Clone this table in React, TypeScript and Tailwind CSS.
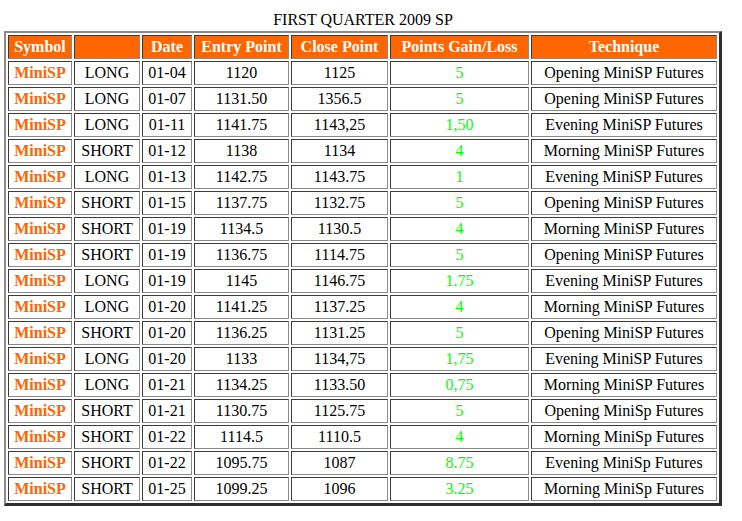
const rows: [string, string, string, string, string, string][] = [
  ['LONG', '01-04', '1120', '1125', '5', 'Opening MiniSP Futures'],
  ['LONG', '01-07', '1131.50', '1356.5', '5', 'Opening MiniSP Futures'],
  ['LONG', '01-11', '1141.75', '1143,25', '1,50', 'Evening MiniSP Futures'],
  ['SHORT', '01-12', '1138', '1134', '4', 'Morning MiniSP Futures'],
  ['LONG', '01-13', '1142.75', '1143.75', '1', 'Evening MiniSP Futures'],
  ['SHORT', '01-15', '1137.75', '1132.75', '5', 'Opening MiniSP Futures'],
  ['SHORT', '01-19', '1134.5', '1130.5', '4', 'Morning MiniSP Futures'],
  ['SHORT', '01-19', '1136.75', '1114.75', '5', 'Opening MiniSP Futures'],
  ['LONG', '01-19', '1145', '1146.75', '1.75', 'Evening MiniSP Futures'],
  ['LONG', '01-20', '1141.25', '1137.25', '4', 'Morning MiniSP Futures'],
  ['SHORT', '01-20', '1136.25', '1131.25', '5', 'Opening MiniSP Futures'],
  ['LONG', '01-20', '1133', '1134,75', '1,75', 'Evening MiniSP Futures'],
  ['LONG', '01-21', '1134.25', '1133.50', '0,75', 'Morning MiniSP Futures'],
  ['SHORT', '01-21', '1130.75', '1125.75', '5', 'Opening MiniSp Futures'],
  ['SHORT', '01-22', '1114.5', '1110.5', '4', 'Morning MiniSp Futures'],
  ['SHORT', '01-22', '1095.75', '1087', '8.75', 'Evening MiniSp Futures'],
  ['SHORT', '01-25', '1099.25', '1096', '3.25', 'Morning MiniSp Futures'],
]

// inset cell border, like an old border=2 table
const cell =
  'h-[24px] p-0 text-center align-middle leading-[18px] border border-t-[#3a3a3a] border-l-[#3a3a3a] border-r-[#8a8a8a] border-b-[#8a8a8a]'

const head = cell + ' bg-[#ff6600] font-bold text-white'

export default function App() {
  return (
    <div className="bg-white min-h-[521px] pl-[4px] pt-[11px] font-serif text-[16px] text-black">
      <table className="font-[Liberation_Serif] border-separate border-spacing-[2px] border-t-2 border-l-2 border-r-[3px] border-b-[3px] border-t-[#8a8a8a] border-l-[#8a8a8a] border-r-[#2e2e2e] border-b-[#2e2e2e]">
        <caption className="leading-[18px] pb-[2px]">FIRST QUARTER 2009 SP</caption>
        <thead>
          <tr>
            <th className={head + ' w-[64px]'}>Symbol</th>
            <th className={head + ' w-[66px]'}></th>
            <th className={head + ' w-[50px]'}>Date</th>
            <th className={head + ' w-[95px]'}>Entry Point</th>
            <th className={head + ' w-[97px]'}>Close Point</th>
            <th className={head + ' w-[139px]'}>Points Gain/Loss</th>
            <th className={head + ' w-[186px]'}>Technique</th>
          </tr>
        </thead>
        <tbody>
          {rows.map((r, i) => (
            <tr key={i}>
              <td className={cell + ' font-bold text-[#ff6600]'}>MiniSP</td>
              <td className={cell}>{r[0]}</td>
              <td className={cell}>{r[1]}</td>
              <td className={cell}>{r[2]}</td>
              <td className={cell}>{r[3]}</td>
              <td className={cell + ' text-[#00ff00]'}>{r[4]}</td>
              <td className={cell}>{r[5]}</td>
            </tr>
          ))}
        </tbody>
      </table>
    </div>
  )
}
